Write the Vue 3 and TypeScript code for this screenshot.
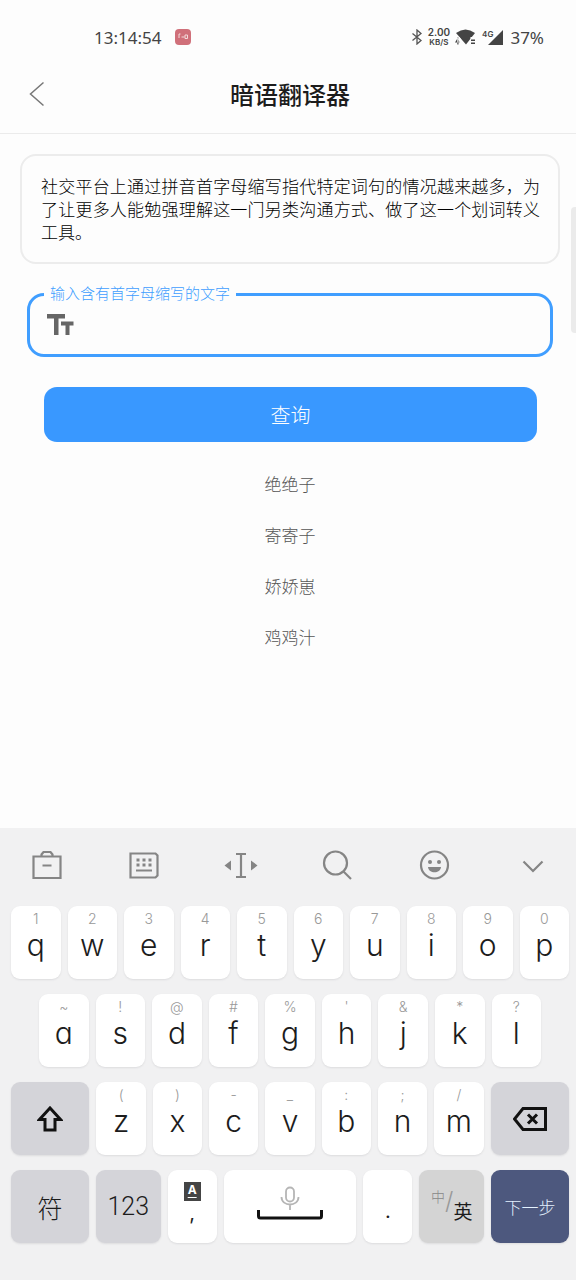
<script setup lang="ts">
import { ref } from 'vue'

interface LetterKey {
  letter: string
  hint: string
}

const toKeys = (letters: string, hints: string): LetterKey[] =>
  letters.split('').map((letter, i) => ({ letter, hint: hints[i] }))

const topRow = toKeys('qwertyuiop', '1234567890')
const homeRow = toKeys('asdfghjkl', "~!@#%'&*?")
const bottomRow = toKeys('zxcvbnm', '()-_:;/')

const suggestions: string[] = ['绝绝子', '寄寄子', '娇娇崽', '鸡鸡汁']
const query = ref('')
</script>

<template>
  <div class="screen">
    <div class="status">
      <span class="clock">13:14:54</span>
      <span class="app-badge"><svg viewBox="0 0 16 16" width="16" height="16"><path d="M4 5v4M4 5h1.500M6.500 8h3M10 6v3.500h2.500V6H10" /></svg></span>
      <div class="status-right">
        <svg class="bt" viewBox="0 0 12 16" width="12" height="16"><path d="M1.500 4.500l8.500 7L6 15V1l4 3.500-8.500 7" /></svg>
        <span class="speed"><b>2.00</b><b class="unit">KB/S</b></span>
        <svg class="wifi" viewBox="0 0 22 18" width="22" height="18">
          <path d="M1 5Q10.500-2 20 5L11 16.500z" />
          <path class="gap" d="M0 9h4.500l2 3v6H0zM15.500 9H22v9h-6.500z" />
          <path d="M3 9.500L0 14.500h4.500M3.500 9.500v7H2.300v-7zM16 11.500h4V13h-4zM16 14.500h4V16h-4z" />
        </svg>
        <span class="signal">
          <span class="net">4G</span>
          <svg viewBox="0 0 15 15" width="15" height="15"><path d="M15 0v15H0z" /></svg>
        </span>
        <span class="battery">37%</span>
      </div>
    </div>

    <header class="header">
      <button class="back" type="button" aria-label="返回">
        <svg viewBox="0 0 16 26" width="16" height="26"><path d="M14.500 1.500L1.500 13l13 11.500" /></svg>
      </button>
      <h1>暗语翻译器</h1>
    </header>

    <main class="content">
      <p class="intro">社交平台上通过拼音首字母缩写指代特定词句的情况越来越多，为了让更多人能勉强理解这一门另类沟通方式、做了这一个划词转义工具。</p>
      <fieldset class="field">
        <legend><label for="query">输入含有首字母缩写的文字</label></legend>
        <div class="field-row">
          <svg viewBox="0 0 27 21" width="27" height="21"><path d="M0 0h18v4.500h-6.500V21H7V4.500H0zM14 7.500h12.500v4h-4V21H18.500v-9.500H14z" /></svg>
          <input id="query" v-model="query" type="text" autocomplete="off" />
        </div>
      </fieldset>
      <button class="submit" type="button">查询</button>
      <ul class="suggestions">
        <li v-for="word in suggestions" :key="word">
          <button type="button" @click="query = word">{{ word }}</button>
        </li>
      </ul>
    </main>
    <div class="scroll-thumb"></div>

    <section class="keyboard" aria-label="键盘">
      <div class="toolbar">
        <button type="button" aria-label="工具箱">
          <svg viewBox="0 0 36 32" width="36" height="32"><path d="M4.500 7.500h27v21.500h-27zM12.500 7.500v-2L14.500 3h7l2 2.500v2M13.500 16.500h9" /></svg>
        </button>
        <button type="button" aria-label="键盘样式">
          <svg viewBox="0 0 36 32" width="36" height="32"><path d="M4.500 4.500h25l2 2v20l-2 2h-25zM10 21.500h16" /><path class="dots" d="M10.500 11h3M16.500 11h3M22.500 11h3M10.500 16h3M16.500 16h3M22.500 16h3" /></svg>
        </button>
        <button type="button" aria-label="移动光标">
          <svg viewBox="0 0 36 32" width="36" height="32"><path d="M13 5h10M13 28h10M18 5v23" /><path class="solid" d="M8 11.500v10L1.500 16.500zM28 11.500v10l6.500-5z" /></svg>
        </button>
        <button type="button" aria-label="搜索">
          <svg viewBox="0 0 36 32" width="36" height="32"><circle cx="14.500" cy="14" r="11.500" /><path d="M22 22l8 8" /></svg>
        </button>
        <button type="button" aria-label="表情">
          <svg viewBox="0 0 36 32" width="36" height="32"><circle cx="16.500" cy="16" r="13.500" /><circle class="solid" cx="12" cy="13" r="2" /><circle class="solid" cx="21" cy="13" r="2" /><path class="solid" d="M10 18h13c-.5 7-12.500 7-13 0z" /></svg>
        </button>
        <button type="button" aria-label="收起键盘">
          <svg viewBox="0 0 36 32" width="36" height="32"><path d="M8.500 12.500L18 22l9.500-9.500" /></svg>
        </button>
      </div>

      <div class="rows">
        <div class="row">
          <button v-for="k in topRow" :key="k.letter" class="key letter" type="button">
            <span class="hint">{{ k.hint }}</span><span class="glyph">{{ k.letter }}</span>
          </button>
        </div>
        <div class="row home">
          <button v-for="k in homeRow" :key="k.letter" class="key letter" type="button">
            <span class="hint">{{ k.hint }}</span><span class="glyph">{{ k.letter }}</span>
          </button>
        </div>
        <div class="row">
          <button class="key gray wide" type="button" aria-label="大写">
            <svg viewBox="0 0 26 26" width="26" height="26"><path d="M13 2L2.500 13.500H8V24h10V13.500h5.500z" /></svg>
          </button>
          <button v-for="k in bottomRow" :key="k.letter" class="key letter" type="button">
            <span class="hint">{{ k.hint }}</span><span class="glyph">{{ k.letter }}</span>
          </button>
          <button class="key gray wide" type="button" aria-label="删除">
            <svg viewBox="0 0 34 24" width="34" height="24"><path d="M10 1.500h22.500v21H10L1.500 12zM15 7.500l9 9M24 7.500l-9 9" /></svg>
          </button>
        </div>
        <div class="row">
          <button class="key gray wide symbols" type="button">符</button>
          <button class="key gray medium digits" type="button">123</button>
          <button class="key comma" type="button"><span class="caps">A</span><span class="mark">,</span></button>
          <button class="key space" type="button" aria-label="空格">
            <svg viewBox="0 0 66 34" width="66" height="34">
              <path class="mic" d="M29 5.500a4 4 0 0 1 8 0v6a4 4 0 0 1-8 0zM24.500 11c0 10 17 10 17 0M33 19v5" />
              <path d="M1.500 24v6q0 2 2 2h59q2 0 2-2v-6" />
            </svg>
          </button>
          <button class="key period" type="button">.</button>
          <button class="key gray medium lang" type="button"><span class="zh">中</span><span class="slash">/</span><span class="en">英</span></button>
          <button class="key wide next" type="button">下一步</button>
        </div>
      </div>
    </section>
  </div>
</template>

<style>
body {
  margin: 0;
}
</style>

<style scoped>
* {
  box-sizing: border-box;
}

.screen {
  position: relative;
  display: flex;
  flex-direction: column;
  min-height: 100vh;
  background: #fdfdfd;
  color: #1c1c1c;
  font-family: Inter, "Noto Sans CJK SC", sans-serif;
}

button {
  margin: 0;
  padding: 0;
  border: 0;
  background: none;
  color: inherit;
  font: inherit;
}

svg {
  display: block;
  fill: none;
}

.status {
  display: flex;
  align-items: center;
  height: 60px;
  padding: 14px 32px 0 94px;
  color: #444;
}

.clock {
  font-family: "Noto Sans", sans-serif;
  font-size: 17px;
}

.app-badge {
  margin-left: 14px;
  border-radius: 4px;
  background: #d0707a;
}

.app-badge path {
  stroke: #f3dada;
}

.status-right {
  display: flex;
  align-items: center;
  gap: 5px;
  margin-left: auto;
}

.bt path {
  stroke: #555;
  stroke-width: 1.3;
}

.speed {
  display: flex;
  flex-direction: column;
  align-items: center;
  font-size: 10px;
  line-height: 11px;
}

.speed b {
  font-weight: 600;
}

.speed .unit {
  font-size: 8px;
  line-height: 9px;
}

.wifi path,
.signal path {
  fill: #444;
}

.wifi .gap {
  fill: #fdfdfd;
}

.signal {
  display: flex;
  align-items: flex-end;
}

.net {
  align-self: flex-start;
  margin-right: -5px;
  font-size: 8px;
  font-weight: 600;
  line-height: 8px;
}

.battery {
  margin-left: 2px;
  font-family: "Noto Sans", sans-serif;
  font-size: 17px;
}

.header {
  display: grid;
  grid-template-columns: 46px 1fr 46px;
  align-items: center;
  height: 74px;
  padding: 0 10px 4px 14px;
  border-bottom: 1px solid #ebebeb;
}

.back {
  display: flex;
  justify-content: center;
  padding: 7px 0 9px;
}

.back path {
  stroke: #777;
  stroke-width: 1.5;
}

h1 {
  margin: 0;
  padding-top: 3px;
  font-size: 24px;
  font-weight: 500;
  line-height: 32px;
  text-align: center;
}

.content {
  display: flex;
  flex-direction: column;
  padding: 20px 16px 0 20px;
}

.intro {
  margin: 0;
  padding: 20px 18px 17px 19px;
  border: 2px solid #ececec;
  border-radius: 16px;
  color: #000;
  font-size: 17px;
  font-weight: 300;
  line-height: 23px;
  text-align: justify;
}

.field {
  min-width: 0;
  margin: 21px 7px 0;
  padding: 0 14px;
  border: 3px solid #409eff;
  border-radius: 17px;
}

legend {
  padding: 0 6px;
  color: #409eff;
  font-size: 15px;
  font-weight: 300;
  line-height: 18px;
}

.field-row {
  display: flex;
  align-items: center;
  gap: 10px;
  height: 51px;
  padding: 0 3px 9px;
}

.field-row path {
  fill: #666;
}

.field-row input {
  flex: 1;
  min-width: 0;
  height: 40px;
  padding: 0;
  border: 0;
  outline: 0;
  background: none;
  font: inherit;
  font-size: 17px;
}

.submit {
  height: 55px;
  margin: 30px 23px 0 24px;
  border-radius: 13px;
  background: #3998ff;
  color: #fff;
  font-size: 20px;
  font-weight: 300;
}

.suggestions {
  margin: 16px 0 0;
  padding: 0;
  list-style: none;
}

.suggestions li {
  display: flex;
  justify-content: center;
  height: 51px;
}

.suggestions button {
  padding: 0 16px;
  color: #555;
  font-size: 17px;
  font-weight: 300;
}

.scroll-thumb {
  position: absolute;
  top: 207px;
  right: 0;
  width: 5px;
  height: 126px;
  border-radius: 4px 0 0 4px;
  background: #ebebeb;
}

.keyboard {
  margin-top: auto;
  padding-bottom: 37px;
  background: #f1f1f2;
}

.toolbar {
  display: flex;
  align-items: center;
  justify-content: space-between;
  height: 78px;
  padding: 0 25px 4px 29px;
}

.toolbar svg {
  stroke: #858585;
  stroke-width: 2.2;
}

.toolbar .dots {
  stroke-width: 3;
}

.toolbar .solid {
  fill: #858585;
  stroke: none;
}

.rows {
  display: flex;
  flex-direction: column;
  gap: 15px;
  padding: 0 7px 0 11px;
}

.row {
  display: flex;
  gap: 7px;
}

.home {
  padding: 0 28px;
}

.key {
  display: flex;
  flex: 49 1 0;
  flex-direction: column;
  align-items: center;
  justify-content: center;
  min-width: 0;
  height: 73px;
  border-radius: 9px;
  background: #fff;
  box-shadow: 0 1px 2px #dcdcde;
}

.letter {
  justify-content: flex-start;
  padding-top: 4px;
}

.hint {
  color: #999;
  font-size: 14px;
  font-weight: 300;
  line-height: 17px;
}

.glyph {
  font-size: 30px;
  font-weight: 300;
  font-feature-settings: "cv11";
  line-height: 36px;
}

.gray {
  background: #d4d4d9;
}

.wide {
  flex-grow: 78;
}

.medium {
  flex-grow: 65;
}

.wide path {
  stroke: #111;
  stroke-width: 3;
}

.symbols {
  font-size: 25px;
  font-weight: 300;
}

.digits {
  font-family: Roboto, sans-serif;
  font-size: 25px;
  font-weight: 300;
}

.comma {
  justify-content: flex-start;
  padding-top: 12px;
}

.caps {
  width: 17px;
  height: 19px;
  background: #444;
  color: #fff;
  font-size: 12px;
  font-weight: 700;
  line-height: 15px;
  text-decoration: underline;
  text-underline-offset: 3px;
}

.mark {
  font-size: 20px;
  line-height: 24px;
}

.space {
  flex-grow: 133;
  padding-bottom: 8px;
}

.space path {
  stroke: #111;
  stroke-width: 3;
}

.space .mic {
  stroke: #b5b5b5;
  stroke-width: 1.8;
}

.period {
  padding-top: 8px;
  font-size: 20px;
}

.lang {
  flex-direction: row;
  background: #d4d4d4;
}

.zh {
  padding-bottom: 22px;
  color: #888;
  font-size: 14px;
  font-weight: 300;
}

.slash {
  padding-bottom: 12px;
  color: #999;
  font-size: 24px;
  font-weight: 300;
}

.en {
  padding-top: 8px;
  font-size: 19px;
}

.next {
  background: #4d587e;
  color: #e4f2ff;
  font-size: 17px;
  font-weight: 300;
}
</style>
